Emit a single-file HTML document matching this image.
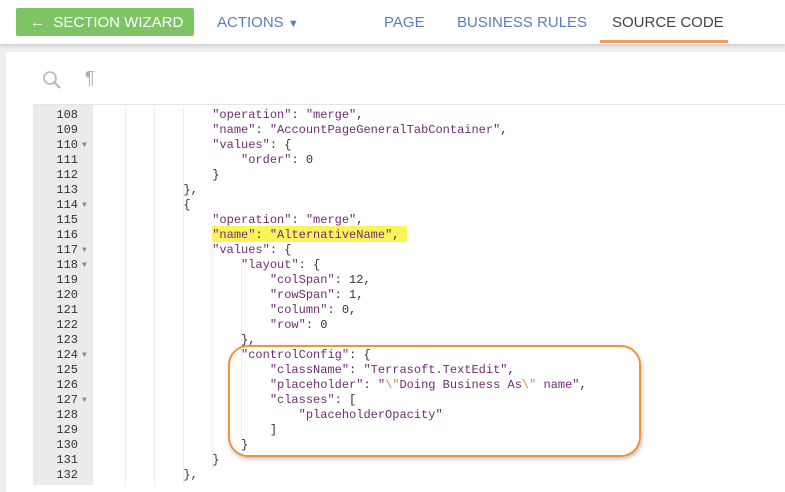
<!DOCTYPE html>
<html><head><meta charset="utf-8"><style>
*{margin:0;padding:0;box-sizing:border-box}
body{width:785px;height:485px;overflow:hidden;background:#efefef;font-family:"Liberation Sans",sans-serif;position:relative}
.top{position:absolute;left:0;top:0;width:785px;height:44px;background:#fff;box-shadow:0 2px 4px rgba(0,0,0,.15)}
.btn{position:absolute;left:16px;top:8px;width:178px;height:28px;background:#7dc465;border-radius:2px;color:#fff;font-size:15px;line-height:29px;padding-left:14px}
.nav{position:absolute;top:14px;font-size:15px;color:#5a7fb8}
.panel{position:absolute;left:6px;top:52px;width:790px;height:440px;background:#fff}
.gut{position:absolute;left:33px;top:105px;width:60px;height:380px;background:#ebebeb}
.sep{position:absolute;left:33px;top:104px;width:752px;height:1px;background:#e4e4e4}
.code{position:absolute;left:0;top:108px;font-family:"Liberation Mono",monospace;font-size:12px;line-height:15px;color:#333}
.ln{position:absolute;left:40px;width:38px;text-align:right;color:#333}
.ar{position:absolute;left:82px;font-size:8px;color:#888}
.tx{position:absolute;left:97px;white-space:pre}
.s{color:#6f2c73}
.g{position:absolute;top:108px;width:1px;height:377px;border-left:1px dotted #ddd}
.hl{position:absolute;left:212px;top:226px;width:195px;height:16px;background:#fbf35a}
</style></head><body>
<div class="top">
<div class="btn">←&nbsp; SECTION WIZARD</div>
<div class="nav" style="left:217px">ACTIONS <span style="font-size:11px">▼</span></div>
<div class="nav" style="left:384px">PAGE</div>
<div class="nav" style="left:457px">BUSINESS RULES</div>
<div class="nav" style="left:612px;color:#444">SOURCE CODE</div>
<div style="position:absolute;left:600px;top:40px;width:128px;height:3px;background:#ef9a5e"></div>
</div>
<div class="panel"></div>
<svg style="position:absolute;left:41px;top:69px" width="24" height="22"><circle cx="9" cy="9" r="6" fill="none" stroke="#b5b5b5" stroke-width="1.6"/><line x1="13.5" y1="13.5" x2="19" y2="19" stroke="#b5b5b5" stroke-width="2"/></svg>
<div style="position:absolute;left:85px;top:68px;font-size:18px;color:#a5adb3">¶</div>
<div class="sep"></div>
<div class="gut"></div>
<div class="g" style="left:125px"></div><div class="g" style="left:154px"></div><div class="g" style="left:183px"></div>
<div class="g" style="left:212px;top:228px;height:240px"></div>
<div class="g" style="left:241px;top:258px;height:180px"></div>
<div class="hl"></div>
<div class="code">
<div class="ln" style="top:0">108</div><div class="tx" style="top:0">                <span class="s">"operation"</span>: <span class="s">"merge"</span>,</div>
<div class="ln" style="top:15px">109</div><div class="tx" style="top:15px">                <span class="s">"name"</span>: <span class="s">"AccountPageGeneralTabContainer"</span>,</div>
<div class="ln" style="top:30px">110</div><div class="ar" style="top:30px">▼</div><div class="tx" style="top:30px">                <span class="s">"values"</span>: {</div>
<div class="ln" style="top:45px">111</div><div class="tx" style="top:45px">                    <span class="s">"order"</span>: 0</div>
<div class="ln" style="top:60px">112</div><div class="tx" style="top:60px">                }</div>
<div class="ln" style="top:75px">113</div><div class="tx" style="top:75px">            },</div>
<div class="ln" style="top:90px">114</div><div class="ar" style="top:90px">▼</div><div class="tx" style="top:90px">            {</div>
<div class="ln" style="top:105px">115</div><div class="tx" style="top:105px">                <span class="s">"operation"</span>: <span class="s">"merge"</span>,</div>
<div class="ln" style="top:120px">116</div><div class="tx" style="top:120px">                <span class="s">"name"</span>: <span class="s">"AlternativeName"</span>,</div>
<div class="ln" style="top:135px">117</div><div class="ar" style="top:135px">▼</div><div class="tx" style="top:135px">                <span class="s">"values"</span>: {</div>
<div class="ln" style="top:150px">118</div><div class="ar" style="top:150px">▼</div><div class="tx" style="top:150px">                    <span class="s">"layout"</span>: {</div>
<div class="ln" style="top:165px">119</div><div class="tx" style="top:165px">                        <span class="s">"colSpan"</span>: 12,</div>
<div class="ln" style="top:180px">120</div><div class="tx" style="top:180px">                        <span class="s">"rowSpan"</span>: 1,</div>
<div class="ln" style="top:195px">121</div><div class="tx" style="top:195px">                        <span class="s">"column"</span>: 0,</div>
<div class="ln" style="top:210px">122</div><div class="tx" style="top:210px">                        <span class="s">"row"</span>: 0</div>
<div class="ln" style="top:225px">123</div><div class="tx" style="top:225px">                    },</div>
<div class="ln" style="top:240px">124</div><div class="ar" style="top:240px">▼</div><div class="tx" style="top:240px">                    <span class="s">"controlConfig"</span>: {</div>
<div class="ln" style="top:255px">125</div><div class="tx" style="top:255px">                        <span class="s">"className"</span>: <span class="s">"Terrasoft.TextEdit"</span>,</div>
<div class="ln" style="top:270px">126</div><div class="tx" style="top:270px">                        <span class="s">"placeholder"</span>: <span class="s">"<span style="color:#e0884a">\"</span>Doing Business As<span style="color:#e0884a">\"</span> name"</span>,</div>
<div class="ln" style="top:285px">127</div><div class="ar" style="top:285px">▼</div><div class="tx" style="top:285px">                        <span class="s">"classes"</span>: [</div>
<div class="ln" style="top:300px">128</div><div class="tx" style="top:300px">                            <span class="s">"placeholderOpacity"</span></div>
<div class="ln" style="top:315px">129</div><div class="tx" style="top:315px">                        ]</div>
<div class="ln" style="top:330px">130</div><div class="tx" style="top:330px">                    }</div>
<div class="ln" style="top:345px">131</div><div class="tx" style="top:345px">                }</div>
<div class="ln" style="top:360px">132</div><div class="tx" style="top:360px">            },</div>
</div>
<div style="position:absolute;left:228px;top:345px;width:413px;height:112px;border:2px solid #ef9535;border-radius:20px;box-shadow:1px 2px 4px rgba(0,0,0,.25)"></div>
</body></html>
